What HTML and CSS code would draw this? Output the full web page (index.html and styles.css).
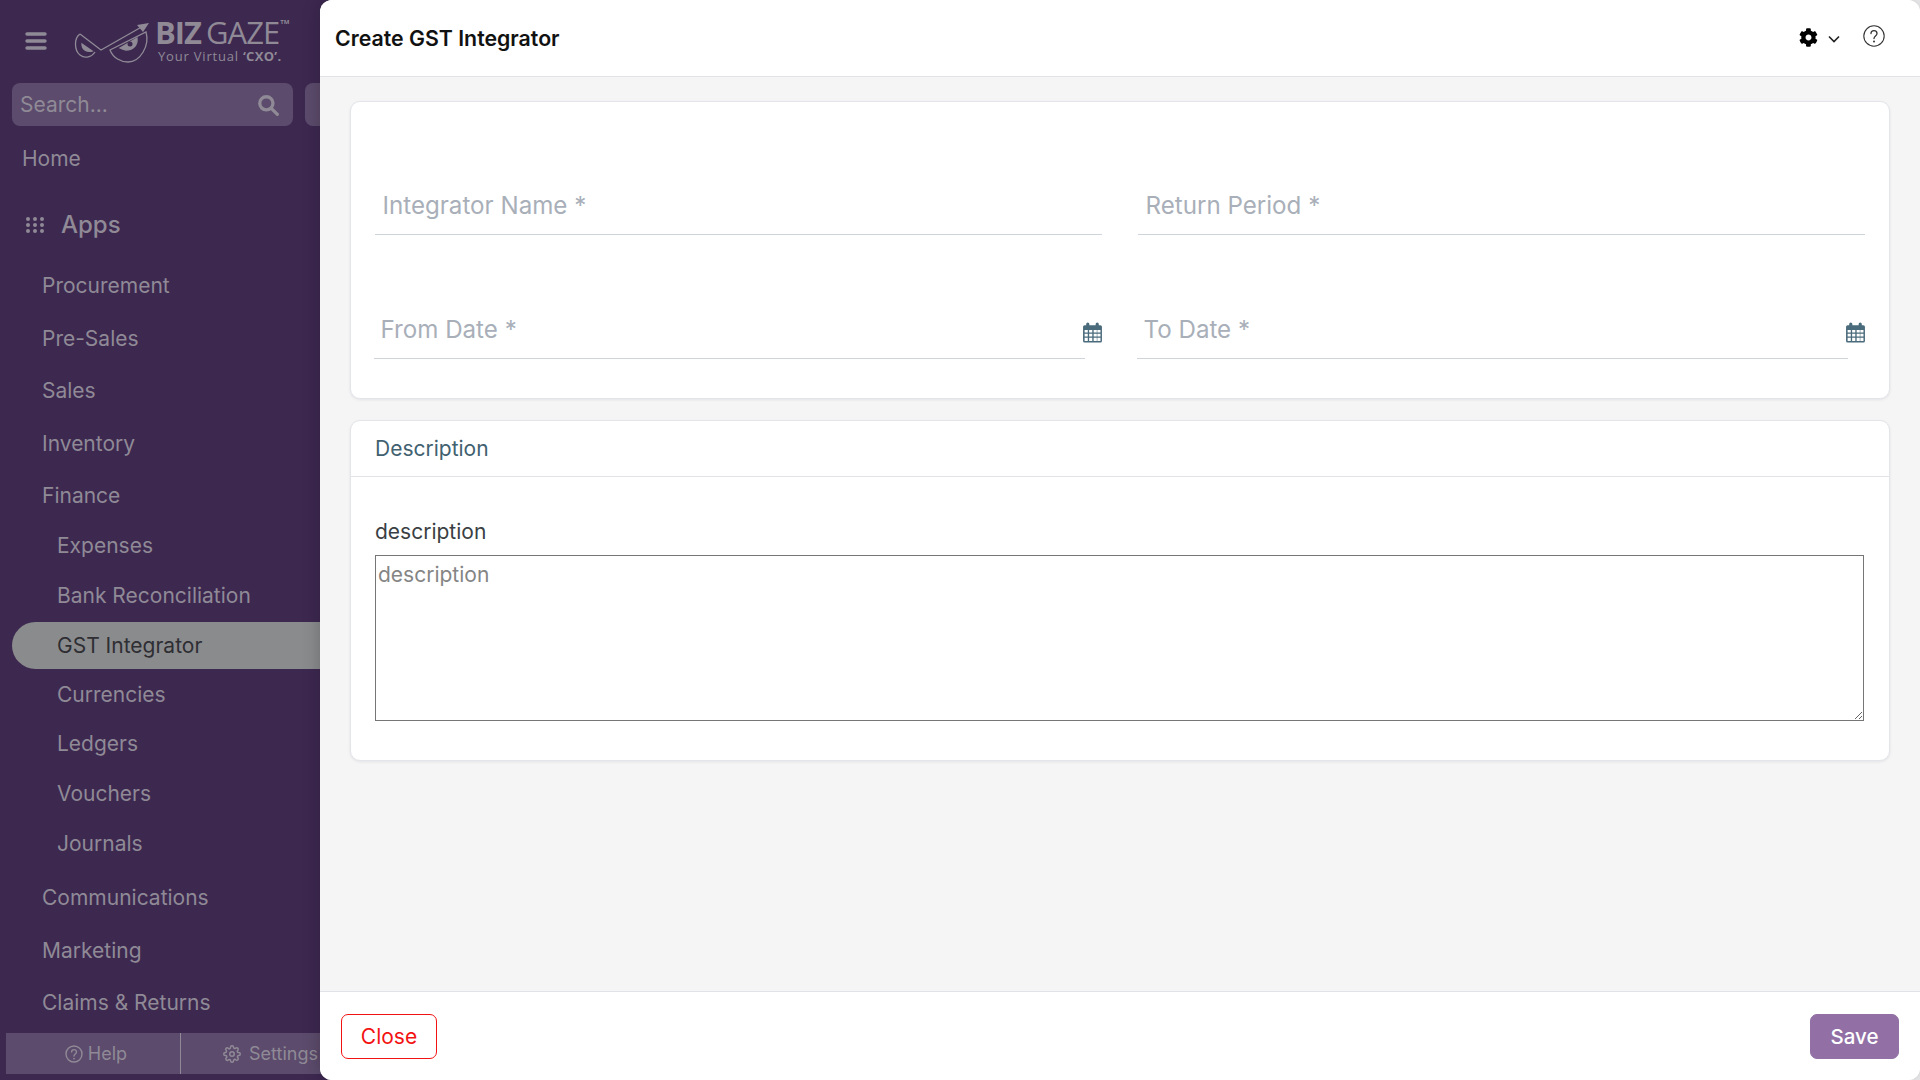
FILE: index.html
```html
<!DOCTYPE html>
<html lang="en">
<head>
<meta charset="utf-8">
<title>Create GST Integrator</title>
<link rel="stylesheet" href="styles.css">
</head>
<body>
<div class="app">
  <aside class="sidebar">
    <div class="brand">
      <svg class="burger" width="22" height="20" viewBox="0 0 22 20"><path d="M2 3h18M2 10h18M2 17h18" stroke="#8f8a96" stroke-width="3.4" stroke-linecap="round" fill="none"/></svg>
      <svg class="eyes" width="76" height="42" viewBox="0 0 76 42" fill="none" stroke="#8f8a96" stroke-width="1.3">
        <path d="M6 12C0 16 0 28 6 33c5 4 12 2 15-3"/>
        <path d="M6 12l21 16L71 3"/>
        <path d="M75 1l-12 2 6 7z" fill="#8f8a96" stroke="none"/>
        <path d="M8 22l10 7c-5 1-10-1-10-7z" fill="#8f8a96"/>
        <path d="M36 28c3 8 11 12 18 12 12 0 22-16 18-30z"/>
        <path d="M46 26l17-10c1 8-5 12-11 12-2 0-4-1-6-2z" fill="#8f8a96"/>
        <circle cx="56" cy="22" r="2.500" fill="#3d2850" stroke="none"/>
      </svg>
      <div class="wordmark">
        <div class="wm-top"><span class="wm-biz">BIZ</span><span class="wm-gaze">GAZE</span><span class="wm-tm">TM</span></div>
        <div class="wm-sub">Your Virtual <b>‘CXO’.</b></div>
      </div>
    </div>
    <div class="search-row">
      <div class="search">
        <span>Search...</span>
        <svg width="22" height="22" viewBox="0 0 20 20" fill="none" stroke="#8f8a96" stroke-width="3"><circle cx="8.500" cy="8.500" r="6"/><path d="M13 13l5.500 5.500" stroke-linecap="round"/></svg>
      </div>
      <div class="search-stub"></div>
    </div>
    <a class="nav-home">Home</a>
    <div class="apps">
      <svg width="20" height="18" viewBox="0 0 20 18" fill="#8f8a96"><circle cx="3" cy="3" r="2"/><circle cx="10" cy="3" r="2"/><circle cx="17" cy="3" r="2"/><circle cx="3" cy="9" r="2"/><circle cx="10" cy="9" r="2"/><circle cx="17" cy="9" r="2"/><circle cx="3" cy="15" r="2"/><circle cx="10" cy="15" r="2"/><circle cx="17" cy="15" r="2"/></svg>
      <span>Apps</span>
    </div>
    <nav class="nav">
      <a class="nav-item">Procurement</a>
      <a class="nav-item">Pre-Sales</a>
      <a class="nav-item">Sales</a>
      <a class="nav-item">Inventory</a>
      <a class="nav-item">Finance</a>
      <div class="subnav">
        <a class="sub-item">Expenses</a>
        <a class="sub-item">Bank Reconciliation</a>
        <a class="sub-item active">GST Integrator</a>
        <a class="sub-item">Currencies</a>
        <a class="sub-item">Ledgers</a>
        <a class="sub-item">Vouchers</a>
        <a class="sub-item">Journals</a>
      </div>
      <a class="nav-item">Communications</a>
      <a class="nav-item">Marketing</a>
      <a class="nav-item">Claims &amp; Returns</a>
    </nav>
    <div class="side-foot">
      <div class="foot-help">
        <svg width="18" height="18" viewBox="0 0 18 18" fill="none" stroke="#8f8a96" stroke-width="1.400"><circle cx="9" cy="9" r="8"/><path d="M6.600 7c0-3.200 4.900-3.200 4.900 0 0 2-2.500 2-2.500 4" stroke-linecap="round"/><circle cx="9" cy="13.600" r=".9" fill="#8f8a96" stroke="none"/></svg>
        <span>Help</span>
      </div>
      <div class="foot-settings">
        <svg width="18" height="18" viewBox="0 0 24 24" fill="none" stroke="#8f8a96" stroke-width="2" stroke-linejoin="round"><circle cx="12" cy="12" r="3"/><path d="M19.400 15a1.650 1.650 0 0 0 .33 1.820l.06.06a2 2 0 1 1-2.830 2.830l-.06-.06a1.650 1.650 0 0 0-2.820 1.170V21a2 2 0 1 1-4 0v-.09a1.650 1.650 0 0 0-2.820-1.110l-.06.06a2 2 0 1 1-2.830-2.830l.06-.06A1.650 1.650 0 0 0 3.090 14H3a2 2 0 1 1 0-4h.09a1.650 1.650 0 0 0 1.110-2.820l-.06-.06a2 2 0 1 1 2.830-2.830l.06.06A1.650 1.650 0 0 0 10 3.090V3a2 2 0 1 1 4 0v.09a1.650 1.650 0 0 0 2.820 1.110l.06-.06a2 2 0 1 1 2.830 2.830l-.06.06A1.650 1.650 0 0 0 20.910 10H21a2 2 0 1 1 0 4h-.09a1.650 1.650 0 0 0-1.510 1z"/></svg>
        <span>Settings</span>
      </div>
    </div>
  </aside>
  <main class="panel">
    <header class="topbar">
      <h1>Create GST Integrator</h1>
      <div class="top-actions">
        <svg class="gear" width="19" height="19" viewBox="0 0 512 512" fill="#000"><path d="M487 316l-43-25c4-23 4-47 0-70l43-25c5-3 7-9 5-14-11-36-30-68-56-95-4-4-10-5-14-2l-43 25c-18-15-39-27-61-35V25c0-6-4-10-9-11-37-8-75-8-110 0-5 1-9 5-9 11v50c-22 8-43 20-61 35L86 85c-5-3-11-2-14 2-26 27-45 59-56 95-2 5 0 11 5 14l43 25c-4 23-4 47 0 70l-43 25c-5 3-7 9-5 14 11 36 30 68 56 95 4 4 10 5 14 2l43-25c18 15 39 27 61 35v50c0 6 4 10 9 11 37 8 75 8 110 0 5-1 9-5 9-11v-50c22-8 43-20 61-35l43 25c5 3 11 2 14-2 26-27 45-59 56-95 2-5 0-11-5-14zM256 336c-44 0-80-36-80-80s36-80 80-80 80 36 80 80-36 80-80 80z"/></svg>
        <svg class="chev" width="12" height="8" viewBox="0 0 12 8" fill="none" stroke="#222" stroke-width="1.600"><path d="M1 1.500l5 5 5-5"/></svg>
        <svg class="help" width="22" height="22" viewBox="0 0 22 22" fill="none" stroke="#333" stroke-width="1.100"><circle cx="11" cy="11" r="10.200"/><path d="M8 8.600c0-4 6-4 6 0 0 2.500-3 2.400-3 5" stroke-linecap="round" stroke-width="1.300"/><circle cx="11" cy="16.400" r="1" fill="#333" stroke="none"/></svg>
      </div>
    </header>
    <div class="content">
      <section class="card form-card">
        <div class="form-grid">
          <div class="field"><span class="ph">Integrator Name *</span></div>
          <div class="field"><span class="ph">Return Period *</span></div>
          <div class="date-field">
            <div class="field date"><span class="ph">From Date *</span></div>
            <svg class="cal" viewBox="0 0 20 20"><use href="#cal"/></svg>
          </div>
          <div class="date-field">
            <div class="field date"><span class="ph">To Date *</span></div>
            <svg class="cal" viewBox="0 0 20 20"><use href="#cal"/></svg>
          </div>
        </div>
      </section>
      <section class="card desc-card">
        <div class="desc-head">Description</div>
        <div class="desc-body">
          <label class="desc-label" for="d">description</label>
          <textarea id="d" class="desc-input" placeholder="description"></textarea>
        </div>
      </section>
    </div>
    <footer class="footer">
      <button class="btn btn-close">Close</button>
      <button class="btn btn-save">Save</button>
    </footer>
  </main>
</div>
<svg class="defs" width="0" height="0">
  <symbol id="cal" viewBox="0 0 20 20">
    <path fill="#4a6b7c" fill-rule="evenodd" d="M1 4.500a1.500 1.500 0 0 1 1.500-1.500H4V2a1.500 1.500 0 0 1 3 0v1h6V2a1.500 1.500 0 0 1 3 0v1h1.500A1.500 1.500 0 0 1 19 4.500V18a1.500 1.500 0 0 1-1.500 1.500h-15A1.500 1.500 0 0 1 1 18zM2.500 7.500v2.500h3V7.500zm4.300 0v2.500h3V7.500zm4.300 0v2.500h3V7.500zm3.500 0v2.500h3V7.500zM2.500 11.200v2.500h3v-2.500zm4.300 0v2.500h3v-2.500zm4.300 0v2.500h3v-2.500zm3.500 0v2.500h3v-2.500zM2.500 14.900V18h3v-3.100zm4.300 0V18h3v-3.100zm4.300 0V18h3v-3.100zm3.500 0V18h3v-3.100z"/>
  </symbol>
</svg>
</body>
</html>
```
FILE: styles.css
```css
* { box-sizing: border-box; }
html, body { margin: 0; height: 100%; }
body { background: #efeff1; font-family: Inter, "Liberation Sans", sans-serif; overflow: hidden; }
.defs { position: absolute; }
.app { display: flex; height: 1080px; width: 1920px; }

.sidebar { width: 332px; margin-right: -12px; flex: none; display: flex; flex-direction: column; background: #3d2850; color: #8f8a96; overflow: hidden; font-size: 21px; }
.brand { display: flex; align-items: center; height: 83px; padding-left: 25px; flex: none; }
.burger { flex: none; margin-top: -2px; }
.eyes { flex: none; margin-left: 27px; margin-top: 2px; }
.wordmark { margin-left: 5px; margin-top: 0; }
.wm-top { display: flex; align-items: flex-start; height: 28px; line-height: 28px; font-family: "Open Sans", sans-serif; font-size: 31px; letter-spacing: -1px; }
.wm-biz { font-weight: 700; margin-right: 5px; }
.wm-gaze { font-weight: 400; }
.wm-tm { font-size: 6px; line-height: 8px; letter-spacing: 0; font-weight: 700; margin-left: 1px; }
.wm-sub { font-family: "Open Sans", sans-serif; font-size: 13px; line-height: 18px; letter-spacing: .8px; margin-top: 1px; padding-left: 3px; }
.wm-sub b { font-weight: 700; letter-spacing: .3px; }

.search-row { display: flex; gap: 12px; padding-left: 12px; flex: none; }
.search { width: 281px; flex: none; height: 43px; background: #5c4b6c; border-radius: 8px; display: flex; align-items: center; justify-content: space-between; padding: 0 14px 0 8px; font-size: 21px; }
.search-stub { width: 40px; height: 43px; flex: none; background: #5c4b6c; border-radius: 8px; }

.nav-home { display: block; padding-left: 22px; margin-top: 15px; line-height: 36px; }
.apps { display: flex; align-items: center; gap: 16px; padding-left: 25px; margin-top: 29px; height: 36px; font-size: 24px; font-weight: 500; }
.apps svg { margin-top: 1px; }
.nav { display: flex; flex-direction: column; margin-top: 18px; }
.nav-item { display: block; padding-left: 42px; height: 52.600px; line-height: 52.600px; }
.subnav { display: flex; flex-direction: column; margin-top: -1px; margin-bottom: 3px; }
.sub-item { display: block; margin-left: 12px; padding-left: 45px; height: 49.600px; line-height: 47.500px; }
.sub-item.active { background: #8a8b8d; color: #2e2e33; border-radius: 24px 0 0 24px; height: 47px; margin: .5px 0 2.100px 12px; }
.side-foot { display: flex; height: 41px; margin: auto 0 6px 6px; flex: none; background: #5c4b6c; font-size: 18px; }
.foot-help { width: 175px; flex: none; display: flex; align-items: center; justify-content: center; gap: 5px; padding-left: 6px; border-right: 1px solid #8f8a96; }
.foot-settings { display: flex; align-items: center; gap: 8px; padding-left: 42px; white-space: nowrap; }

.panel { position: relative; flex: 1; display: flex; flex-direction: column; background: #f5f5f5; border-radius: 12px; overflow: hidden; min-width: 0; box-shadow: 0 0 18px rgba(0,0,0,.22); }
.topbar { height: 77px; flex: none; background: #fff; border-bottom: 1px solid #e1e3e8; display: flex; align-items: center; justify-content: space-between; padding: 0 35px 1px 15px; }
.topbar h1 { margin: 0; font-size: 21.300px; font-weight: 600; color: #111; }
.top-actions { display: flex; align-items: center; }
.chev { margin-left: 10px; margin-top: 3px; }
.help { margin-left: 23px; margin-top: -4px; }

.content { flex: 1; padding: 24px 30px 0 30px; display: flex; flex-direction: column; gap: 21px; min-height: 0; }
.card { background: #fff; border: 1px solid #e3e5ea; border-radius: 10px; box-shadow: 0 1px 3px rgba(30,30,60,.08); }
.form-card { height: 298px; padding: 77px 24px 0 24px; }
.form-grid { display: grid; grid-template-columns: 727px 727px; column-gap: 36px; row-gap: 68px; }
.field { height: 56px; border-bottom: 1px solid #ced4da; display: flex; align-items: center; padding: 0 7px 0 7.500px; }
.ph { font-size: 24.150px; color: #a9afb9; line-height: 1; }
.date-field { display: flex; align-items: flex-end; margin-left: -1px; }
.field.date { flex: none; width: 711px; padding: 0 6px 0 6.500px; }
.cal { flex: none; width: 21px; height: 21px; margin: 0 0 16px -3px; }

.desc-card { height: 341px; }
.desc-head { height: 56px; border-bottom: 1px solid #e1e3e8; padding-left: 24px; line-height: 56px; font-size: 21px; color: #416170; }
.desc-body { padding: 40px 25px 0 24px; }
.desc-label { display: block; font-size: 21px; line-height: 30px; color: #3a3f44; margin-bottom: 8px; }
.desc-input { display: block; width: 100%; height: 166px; border: 1.500px solid #767676; border-radius: 0; padding: 5px 2px; margin: 0; background: #fff; font-family: Inter, sans-serif; font-size: 21px; line-height: 28px; outline: none; }
.desc-input::placeholder { color: #858585; opacity: 1; }

.footer { height: 89px; flex: none; background: #fff; border-top: 1px solid #e1e3e8; display: flex; align-items: center; justify-content: space-between; padding: 0 21px 0 21px; }
.btn { height: 45px; border-radius: 7px; font-family: Inter, sans-serif; font-size: 21px; cursor: pointer; }
.btn-close { width: 96px; background: #fff; border: 1px solid #f31212; color: #f31212; }
.btn-save { width: 89px; background: #9270a5; border: 1px solid #9270a5; color: #fff; font-weight: 500; font-size: 20.500px; }
```
